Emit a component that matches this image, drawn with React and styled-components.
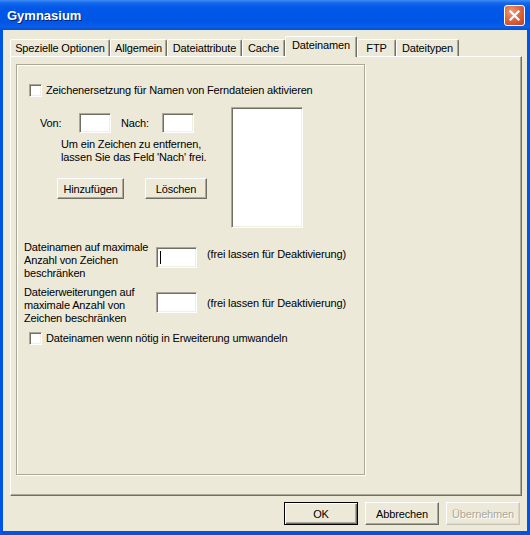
import React from 'react';
import styled, { createGlobalStyle, css } from 'styled-components';

const GlobalStyle = createGlobalStyle`
  body {
    margin: 0;
    background: #ece9d8;
  }
`;

const Window = styled.div`
  width: 530px;
  height: 535px;
  box-sizing: border-box;
  display: flex;
  flex-direction: column;
  background: #0054e3;
  font-family: "Liberation Sans", Arial, sans-serif;
  font-size: 11px;
  letter-spacing: -0.15px;
  color: #000;
  overflow: hidden;
`;

const TitleBar = styled.div`
  height: 30px;
  flex: none;
  display: flex;
  align-items: center;
  justify-content: space-between;
  padding: 0 5px 0 7px;
  background: linear-gradient(to bottom, #3d8ef6 0px, #1467eb 3px, #0058e8 8px, #0056e6 22px, #0a5ee9 27px, #0050d8 30px);
`;

const Title = styled.span`
  font-weight: bold;
  font-size: 13px;
  letter-spacing: 0;
  color: #fff;
  text-shadow: 1px 1px 0 #0a1e79;
`;

const CloseButton = styled.div`
  width: 21px;
  height: 21px;
  box-sizing: border-box;
  border: 1px solid #fff;
  border-radius: 3px;
  background: radial-gradient(circle at 35% 30%, #f09a78 0%, #dd6a45 45%, #c43d17 100%);
  display: flex;
  align-items: center;
  justify-content: center;
`;

const Client = styled.div`
  flex: 1;
  margin: 0 3px 4px;
  background: #ece9d8;
  display: flex;
  flex-direction: column;
  padding: 6px 5px 6px 7px;
`;

const TabStrip = styled.div`
  height: 20px;
  display: flex;
  align-items: flex-end;
  position: relative;
  z-index: 1;
`;

const Tab = styled.div`
  box-sizing: border-box;
  width: ${p => p.$w}px;
  height: 17px;
  display: flex;
  align-items: center;
  justify-content: center;
  background: #ece9d8;
  border-top: 1px solid #fff;
  border-left: 1px solid #fff;
  border-right: 1px solid #716f64;
  border-radius: 2px 2px 0 0;
  box-shadow: inset -1px 0 0 #aca899;
  white-space: nowrap;
  ${p => p.$active && css`
    height: 21px;
    margin-bottom: -1px;
    align-items: flex-start;
    padding-top: 2px;
  `}
`;

const Panel = styled.div`
  flex: 1;
  box-sizing: border-box;
  border-top: 1px solid #fff;
  border-left: 1px solid #fff;
  border-right: 1px solid #716f64;
  border-bottom: 1px solid #716f64;
  box-shadow: inset -1px -1px 0 #aca899;
  padding: 7px 0 0 5px;
`;

const Frame = styled.div`
  width: 349px;
  height: 411px;
  box-sizing: border-box;
  border: 1px solid #aca899;
  box-shadow: 1px 1px 0 #fff, inset 1px 1px 0 #fff;
  padding-top: 19px;
`;

const CheckRow = styled.div`
  display: flex;
  align-items: center;
  gap: 4px;
  margin: ${p => p.$top || 0}px 0 0 12px;
  line-height: 13px;
`;

const CheckBox = styled.div`
  width: 13px;
  height: 13px;
  box-sizing: border-box;
  background: #fff;
  border: 1px solid;
  border-color: #aca899 #fff #fff #aca899;
  box-shadow: inset 1px 1px 0 #716f64, inset -1px -1px 0 #f1efe2;
`;

const ReplaceRow = styled.div`
  display: flex;
  margin: 10px 0 0 23px;
`;

const LeftCol = styled.div`
  width: 191px;
  display: flex;
  flex-direction: column;
`;

const PairRow = styled.div`
  display: flex;
  align-items: center;
  margin-top: 6px;
  line-height: 13px;
`;

const FieldLabel = styled.span`
  width: ${p => p.$w}px;
  margin-left: ${p => p.$ml || 0}px;
`;

const Field = styled.div`
  width: ${p => p.$w}px;
  height: ${p => p.$h}px;
  margin-top: ${p => p.$top || 0}px;
  flex: none;
  box-sizing: border-box;
  background: #fff;
  border: 1px solid;
  border-color: #aca899 #fff #fff #aca899;
  box-shadow: inset 1px 1px 0 #716f64, inset -1px -1px 0 #f1efe2;
  display: flex;
  align-items: center;
  padding-left: 3px;
`;

const Caret = styled.span`
  width: 1px;
  height: 13px;
  background: #000;
`;

const Hint = styled.div`
  margin: 5px 0 0 21px;
  line-height: 13px;
`;

const ButtonPair = styled.div`
  display: flex;
  gap: 21px;
  margin: 14px 0 0 17px;
`;

const Button = styled.button`
  box-sizing: border-box;
  width: ${p => p.$w}px;
  height: ${p => p.$h || 23}px;
  margin: 0;
  padding: 0;
  font: inherit;
  letter-spacing: inherit;
  color: #000;
  background: #ece9d8;
  border: 1px solid;
  border-color: #fff #716f64 #716f64 #fff;
  box-shadow: inset -1px -1px 0 #aca899;
  ${p => p.$default && css`
    border: 1px solid #000;
    box-shadow: inset 1px 1px 0 #fff, inset -1px -1px 0 #716f64, inset -2px -2px 0 #aca899;
  `}
  &:disabled {
    color: #aca899;
    text-shadow: 1px 1px 0 #fff;
    border-color: #fff #c8c5b8 #c8c5b8 #fff;
    box-shadow: inset -1px -1px 0 #ddd9c9;
  }
`;

const ListBox = styled(Field)`
  width: 72px;
  height: 121px;
`;

const LimitRow = styled.div`
  display: flex;
  align-items: flex-start;
  margin: ${p => p.$top}px 0 0 7px;
  line-height: 13px;
`;

const LimitText = styled.div`
  width: 132px;
  flex: none;
`;

const Note = styled.span`
  margin: ${p => p.$top}px 0 0 10px;
`;

const ButtonRow = styled.div`
  display: flex;
  justify-content: flex-end;
  gap: 7px;
  margin-top: 6px;
  padding-right: 2px;
`;

const tabs = [
  { label: 'Spezielle Optionen', w: 100 },
  { label: 'Allgemein', w: 57 },
  { label: 'Dateiattribute', w: 75 },
  { label: 'Cache', w: 43 },
  { label: 'Dateinamen', w: 72, active: true },
  { label: 'FTP', w: 39 },
  { label: 'Dateitypen', w: 63 },
];

export default function App() {
  return (
    <>
      <GlobalStyle />
      <Window>
        <TitleBar>
          <Title>Gymnasium</Title>
          <CloseButton>
            <svg width="11" height="11" viewBox="0 0 11 11">
              <path d="M1.5 1.5 L9.5 9.5 M9.5 1.5 L1.5 9.5" stroke="#fff" strokeWidth="2.2" strokeLinecap="square" />
            </svg>
          </CloseButton>
        </TitleBar>
        <Client>
          <TabStrip>
            {tabs.map(t => (
              <Tab key={t.label} $w={t.w} $active={t.active}>{t.label}</Tab>
            ))}
          </TabStrip>
          <Panel>
            <Frame>
              <CheckRow>
                <CheckBox />
                <span>Zeichenersetzung für Namen von Ferndateien aktivieren</span>
              </CheckRow>
              <ReplaceRow>
                <LeftCol>
                  <PairRow>
                    <FieldLabel $w={39}>Von:</FieldLabel>
                    <Field $w={32} $h={20} />
                    <FieldLabel $w={41} $ml={10}>Nach:</FieldLabel>
                    <Field $w={32} $h={20} />
                  </PairRow>
                  <Hint>
                    Um ein Zeichen zu entfernen,<br />
                    lassen Sie das Feld 'Nach' frei.
                  </Hint>
                  <ButtonPair>
                    <Button $w={67} $h={21}>Hinzufügen</Button>
                    <Button $w={62} $h={21}>Löschen</Button>
                  </ButtonPair>
                </LeftCol>
                <ListBox />
              </ReplaceRow>
              <LimitRow $top={13}>
                <LimitText>
                  Dateinamen auf maximale<br />
                  Anzahl von Zeichen<br />
                  beschränken
                </LimitText>
                <Field $w={41} $h={21} $top={6}><Caret /></Field>
                <Note $top={7}>(frei lassen für Deaktivierung)</Note>
              </LimitRow>
              <LimitRow $top={6}>
                <LimitText>
                  Dateierweiterungen auf<br />
                  maximale Anzahl von<br />
                  Zeichen beschränken
                </LimitText>
                <Field $w={41} $h={21} $top={6} />
                <Note $top={11}>(frei lassen für Deaktivierung)</Note>
              </LimitRow>
              <CheckRow $top={7}>
                <CheckBox />
                <span>Dateinamen wenn nötig in Erweiterung umwandeln</span>
              </CheckRow>
            </Frame>
          </Panel>
          <ButtonRow>
            <Button $w={74} $default>OK</Button>
            <Button $w={74}>Abbrechen</Button>
            <Button $w={74} disabled>Übernehmen</Button>
          </ButtonRow>
        </Client>
      </Window>
    </>
  );
}
